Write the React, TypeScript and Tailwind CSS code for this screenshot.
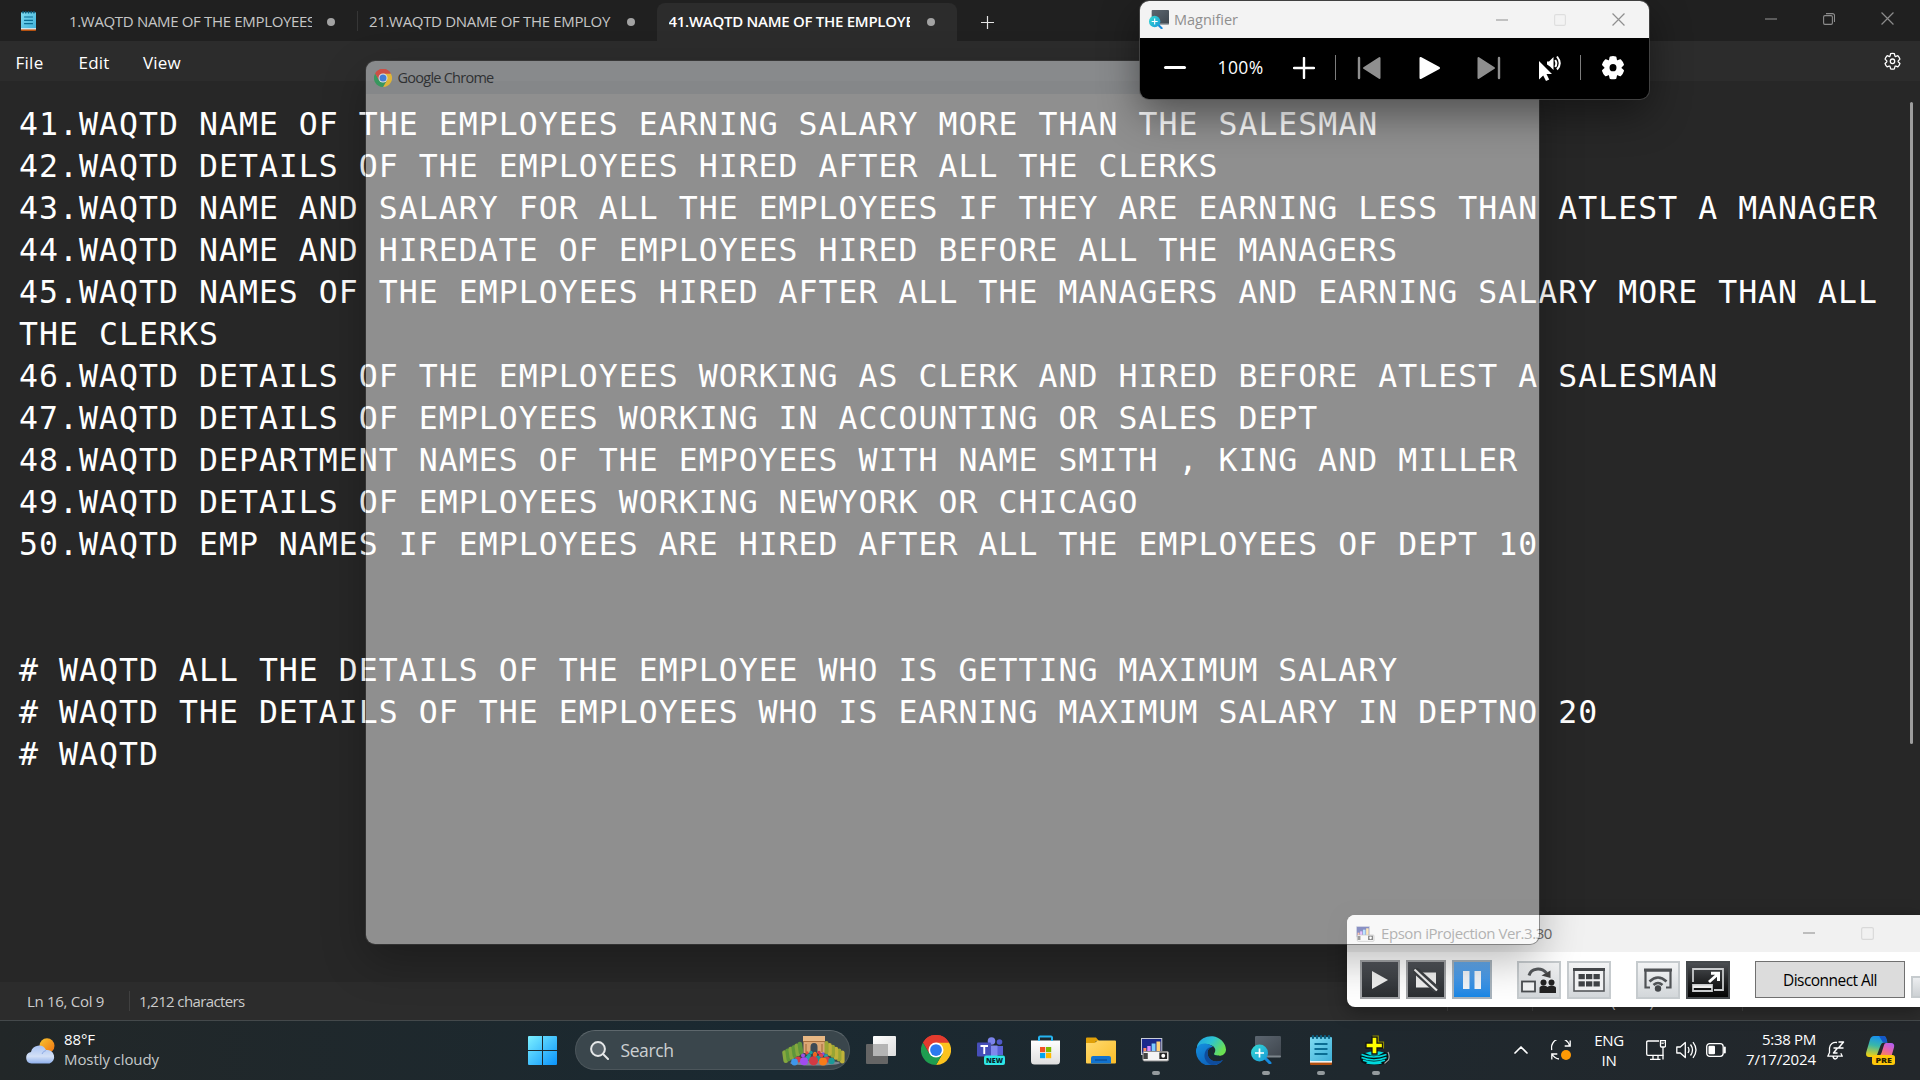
import React, { useLayoutEffect, useRef, useState } from "react";

const UI = "font-['Open_Sans','Noto_Sans',sans-serif]";

/* Single-line label whose letter spacing is tuned so that it spans `w` pixels. */
function Fit({ w, children, className = "" }: { w: number; children: string; className?: string }) {
  const ref = useRef<HTMLSpanElement>(null);
  const [ls, setLs] = useState(0);
  useLayoutEffect(() => {
    const el = ref.current;
    if (!el) return;
    const natural = el.getBoundingClientRect().width;
    setLs((w - natural) / children.length);
  }, [w, children]);
  return (
    <span ref={ref} className={`inline-block shrink-0 whitespace-pre ${className}`} style={{ letterSpacing: `${ls}px` }}>
      {children}
    </span>
  );
}

function NotepadIcon({ className }: { className: string }) {
  return (
    <svg viewBox="0 0 22 30" className={className} preserveAspectRatio="none">
      <defs>
        <linearGradient id="np" x1="0" y1="0" x2="1" y2="1">
          <stop offset="0" stopColor="#7fdcf2" />
          <stop offset="1" stopColor="#3fb0d8" />
        </linearGradient>
      </defs>
      <rect x="0" y="24" width="22" height="6" rx="1" fill="#b4500f" />
      <rect x="0" y="23" width="22" height="4.6" fill="#f2f2f2" />
      <rect x="0" y="2" width="22" height="24" rx="1" fill="url(#np)" />
      {[3, 7, 11, 15, 19].map((x) => (
        <rect key={x} x={x - 1.2} y="0" width="2.4" height="4" rx="1.2" fill="#0b5f80" />
      ))}
      <path d="M4.5 9h13M4.5 14h13M4.5 19h13" stroke="#0a6d93" strokeWidth="1.8" />
    </svg>
  );
}

function ChromeIcon({ className }: { className: string }) {
  return (
    <svg viewBox="0 0 48 48" className={className}>
      <path d="M24 24 3.2 12A24 24 0 0 1 44.8 12Z" fill="#e33b2e" />
      <path d="M24 12H44.8A24 24 0 0 1 24 48L34.4 30Z" fill="#fcc31e" />
      <path d="M3.2 12 13.6 30 24 36 34.4 30 24 48A24 24 0 0 1 3.2 12Z" fill="#1f9d50" />
      <path d="M3.2 12A24 24 0 0 1 44.8 12H24L13.6 30Z" fill="#e33b2e" />
      <circle cx="24" cy="24" r="12" fill="#fff" />
      <circle cx="24" cy="24" r="9.4" fill="#2b79ee" />
    </svg>
  );
}

function MagnifierIcon({ className }: { className: string }) {
  return (
    <svg viewBox="0 0 30 28" className={className} preserveAspectRatio="none">
      <defs>
        <linearGradient id="mgScreen" x1="0" y1="0" x2="1" y2="1">
          <stop offset="0" stopColor="#5c6670" />
          <stop offset="1" stopColor="#3f464e" />
        </linearGradient>
        <linearGradient id="mgLens" x1="0" y1="0" x2="1" y2="1">
          <stop offset="0" stopColor="#35dcd2" />
          <stop offset="1" stopColor="#1897d8" />
        </linearGradient>
      </defs>
      <rect x="4" y="0" width="26" height="21" rx="1.2" fill="url(#mgScreen)" />
      <rect x="4" y="19.5" width="26" height="2" rx="1" fill="#7d858c" />
      <path d="m13 21 6 6" stroke="#1789dc" strokeWidth="3" strokeLinecap="round" />
      <circle cx="8.5" cy="17" r="8.5" fill="url(#mgLens)" />
      <path d="M8.5 12.5v9M4 17h9" stroke="#fff" strokeWidth="1.7" />
    </svg>
  );
}

function ProjectorIcon({ className }: { className: string }) {
  return (
    <svg viewBox="0 0 30 24" className={className} preserveAspectRatio="none">
      <rect x="0.5" y="0.5" width="21" height="16" fill="#1b2a8c" stroke="#c9cdd8" />
      <rect x="2.5" y="10" width="3" height="5" fill="#ff8a5c" />
      <rect x="6.5" y="8" width="3.5" height="7" fill="#d78cff" />
      <rect x="11" y="5.5" width="4" height="9.5" fill="#7ecbff" />
      <rect x="16" y="3.5" width="4" height="11.5" fill="#ffd27a" />
      <rect x="2" y="13.5" width="26.5" height="9.5" rx="1.5" fill="#f4f4f4" stroke="#8d8d8d" />
      <rect x="2.5" y="15" width="4.5" height="6" fill="#444" />
      <rect x="19" y="14.5" width="8" height="6.5" fill="#222" />
      <circle cx="23" cy="17.8" r="2" fill="#fff" />
    </svg>
  );
}

function Gear({ className, filled }: { className: string; filled?: boolean }) {
  const d =
    "M12 1.2c.9 0 1.6.1 2.4.3l.6 2.7c.1.6.7.9 1.3.7l2.5-.9c1.2 1.1 2.1 2.5 2.6 4.1l-2 1.9c-.4.4-.4 1.1 0 1.5l2 1.9c-.5 1.6-1.4 3-2.6 4.1l-2.5-.9c-.6-.2-1.2.1-1.3.7l-.6 2.7c-1.6.4-3.2.4-4.8 0L9 17.3c-.1-.6-.7-.9-1.3-.7l-2.5.9c-1.2-1.1-2.1-2.5-2.6-4.1l2-1.9c.4-.4.4-1.1 0-1.5l-2-1.9c.5-1.6 1.4-3 2.6-4.1l2.5.9c.6.2 1.2-.1 1.3-.7l.6-2.7c.8-.2 1.6-.3 2.4-.3Z";
  return (
    <svg viewBox="0 -0.5 24 23" className={className} preserveAspectRatio="none">
      {filled ? (
        <>
          <path d={d} fill="#fff" stroke="#fff" strokeWidth="1.5" strokeLinejoin="round" />
          <circle cx="12" cy="10.75" r="3.2" fill="#000" />
        </>
      ) : (
        <>
          <path d={d} fill="none" stroke="#fff" strokeWidth="1.6" strokeLinejoin="round" />
          <circle cx="12" cy="10.75" r="2.8" fill="none" stroke="#fff" strokeWidth="1.6" />
        </>
      )}
    </svg>
  );
}

function WinMin({ className }: { className: string }) {
  return (
    <svg viewBox="0 0 12 12" className={className} fill="none" stroke="currentColor" strokeWidth="1.1">
      <path d="M0 6h12" />
    </svg>
  );
}
function WinMax({ className }: { className: string }) {
  return (
    <svg viewBox="0 0 12 12" className={className} fill="none" stroke="currentColor" strokeWidth="1.1">
      <rect x="0.6" y="0.6" width="10.8" height="10.8" rx="1.3" />
    </svg>
  );
}
function WinClose({ className }: { className: string }) {
  return (
    <svg viewBox="0 0 12 12" className={className} fill="none" stroke="currentColor" strokeWidth="1.1">
      <path d="M.5.5l11 11M11.5.5l-11 11" />
    </svg>
  );
}

function Dot({ className }: { className: string }) {
  return <span className={`size-2 shrink-0 rounded-full bg-[#a3a3a3] ${className}`} />;
}

function TitleBar() {
  return (
    <div className="flex h-[41px] shrink-0 items-center bg-[#202020] text-[15px] text-[#c6c6c6]">
      <NotepadIcon className="ml-[21px] h-5 w-[15px]" />
      <div className="ml-[33px] mt-[2px] w-[243px] overflow-hidden">
        <Fit w={246}>1.WAQTD NAME OF THE EMPLOYEES</Fit>
      </div>
      <Dot className="ml-[15px] mt-[2px]" />
      <span className="ml-[22px] h-5 w-px bg-[#363636]" />
      <div className="ml-[11px] mt-[2px] w-[242px] overflow-hidden">
        <Fit w={241}>21.WAQTD DNAME OF THE EMPLOY</Fit>
      </div>
      <Dot className="ml-[16px] mt-[2px]" />
      <div className="ml-[22px] mt-[3px] flex h-[38px] w-[300px] items-center rounded-t-lg bg-[#2c2c2c] pb-px pl-[11.500px] font-semibold text-white">
        <div className="w-[241px] overflow-hidden">
          <Fit w={245}>41.WAQTD NAME OF THE EMPLOYE</Fit>
        </div>
        <Dot className="ml-[17px]" />
      </div>
      <svg viewBox="0 0 13 13" className="ml-[24px] mt-[3px] size-[13px]" stroke="#e4e4e4" strokeWidth="1.2">
        <path d="M6.5 0v13M0 6.5h13" />
      </svg>
      <div className="ml-auto flex items-center pb-[4px] text-[#8c8c8c]">
        <WinMin className="mr-[46px] size-3" />
        <svg viewBox="0 0 12 12" className="mr-[46px] size-3" fill="none" stroke="currentColor" strokeWidth="1.1">
          <rect x="0.6" y="2.6" width="8.8" height="8.8" rx="1.3" />
          <path d="M3 .6h6.500a2 2 0 0 1 2 2V9" />
        </svg>
        <WinClose className="mr-[26px] size-[13px]" />
      </div>
    </div>
  );
}

function MenuBar() {
  return (
    <div className="flex h-10 shrink-0 items-center bg-[#2c2c2c] text-[17px] text-white">
      <Fit w={28} className="ml-[15.500px] mt-[3px]">File</Fit>
      <Fit w={31} className="ml-[35px] mt-[3px]">Edit</Fit>
      <Fit w={38} className="ml-[33.500px] mt-[3px]">View</Fit>
      <Gear className="ml-auto mr-[18px] size-[19px]" />
    </div>
  );
}

const LINES = [
  "41.WAQTD NAME OF THE EMPLOYEES EARNING SALARY MORE THAN THE SALESMAN",
  "42.WAQTD DETAILS OF THE EMPLOYEES HIRED AFTER ALL THE CLERKS",
  "43.WAQTD NAME AND SALARY FOR ALL THE EMPLOYEES IF THEY ARE EARNING LESS THAN ATLEST A MANAGER",
  "44.WAQTD NAME AND HIREDATE OF EMPLOYEES HIRED BEFORE ALL THE MANAGERS",
  "45.WAQTD NAMES OF THE EMPLOYEES HIRED AFTER ALL THE MANAGERS AND EARNING SALARY MORE THAN ALL",
  "THE CLERKS",
  "46.WAQTD DETAILS OF THE EMPLOYEES WORKING AS CLERK AND HIRED BEFORE ATLEST A SALESMAN",
  "47.WAQTD DETAILS OF EMPLOYEES WORKING IN ACCOUNTING OR SALES DEPT",
  "48.WAQTD DEPARTMENT NAMES OF THE EMPOYEES WITH NAME SMITH , KING AND MILLER",
  "49.WAQTD DETAILS OF EMPLOYEES WORKING NEWYORK OR CHICAGO",
  "50.WAQTD EMP NAMES IF EMPLOYEES ARE HIRED AFTER ALL THE EMPLOYEES OF DEPT 10",
  "",
  "",
  "# WAQTD ALL THE DETAILS OF THE EMPLOYEE WHO IS GETTING MAXIMUM SALARY",
  "# WAQTD THE DETAILS OF THE EMPLOYEES WHO IS EARNING MAXIMUM SALARY IN DEPTNO 20",
  "# WAQTD",
];

function Editor() {
  return (
    <div className="flex flex-1 justify-between bg-[#272727] pr-[7px]">
      <div className="pl-[19px] pt-[22px] font-['DejaVu_Sans_Mono',monospace] text-[31.500px] leading-[42px] text-white">
        {LINES.map((l, i) => (
          <div key={i} className="h-[42px] whitespace-pre">
            {l ? <Fit w={l.length * 19.99}>{l}</Fit> : null}
          </div>
        ))}
      </div>
      <div className="mt-[21px] h-[642px] w-[3px] shrink-0 rounded-full bg-[#9d9d9d]" />
    </div>
  );
}

function StatusBar() {
  return (
    <div className="flex h-[38px] shrink-0 items-center bg-[#2c2c2c] text-[15px] text-[#cbcbcb]">
      <Fit w={77} className="ml-[27px]">Ln 16, Col 9</Fit>
      <span className="ml-[25px] h-5 w-px bg-[#404040]" />
      <Fit w={105.5} className="ml-[9px]">1,212 characters</Fit>
      <span className="ml-auto h-5 w-px bg-[#404040]" />
      <Fit w={38} className="ml-[11px]">100%</Fit>
      <span className="ml-[35px] h-5 w-px bg-[#404040]" />
      <Fit w={110} className="ml-[11px]">Windows (CRLF)</Fit>
      <span className="ml-[88px] h-5 w-px bg-[#404040]" />
      <Fit w={40} className="ml-[11px] mr-[126px]">UTF-8</Fit>
    </div>
  );
}

function EpsonButton({ tone, children }: { tone: string; children: React.ReactNode }) {
  return <div className={`flex shrink-0 items-center justify-center border-2 ${tone}`}>{children}</div>;
}

const DARK = "h-[39px] w-[40px] border-[#a2a4a7] bg-linear-to-b from-[#505359] to-[#2b2e31]";
const BLUE = "h-[39px] w-[40px] border-[#a9b4bd] bg-linear-to-b from-[#63a8ea] to-[#1787e6]";
const LIGHT = "h-[38px] w-[44px] border-[#c6cbce] bg-linear-to-b from-[#f3f4f5] to-[#d3d7da]";
const BLACK = "h-[38px] w-[44px] border-[#45494c] bg-linear-to-b from-[#4b4e52] to-[#050505]";

function EpsonWindow() {
  return (
    <div className="absolute left-[1347px] top-[915px] h-[92px] w-[573px] overflow-hidden rounded-l-lg bg-white shadow-[0_4px_18px_rgba(0,0,0,0.35)]">
      <div className="flex h-[37px] items-center bg-[#f1f1f1] text-[15px] text-[#6a6a6a]">
        <ProjectorIcon className="ml-[9px] h-4 w-[19px] shrink-0" />
        <Fit w={171} className="ml-[6px] mb-px">Epson iProjection Ver.3.30</Fit>
        <WinMin className="ml-[251px] mb-[2px] size-3 shrink-0 text-[#8a8a8a]" />
        <WinMax className="ml-[46px] size-[13px] shrink-0 text-[#d9d9d9]" />
      </div>
      <div className="flex w-[620px] items-center pl-[13px] pt-[8px]">
        <div className="flex shrink-0 gap-[6px]">
          <EpsonButton tone={DARK}>
            <svg viewBox="0 0 18 18" className="size-[18px]"><path d="M1 0v18l16-9Z" fill="#f0f0f0" /></svg>
          </EpsonButton>
          <EpsonButton tone={DARK}>
            <svg viewBox="0 0 26 24" className="h-6 w-[26px]">
              <path d="M3 4.500h20v15H3Z" fill="#f0f0f0" />
              <path d="M1 1 24 22" stroke="#3d4044" strokeWidth="7" />
              <path d="M1.500 1.500 24 22.500" stroke="#f0f0f0" strokeWidth="2.2" />
            </svg>
          </EpsonButton>
          <EpsonButton tone={BLUE}>
            <svg viewBox="0 0 18 18" className="size-[18px]"><path d="M0 0h6.500v18H0ZM11.500 0H18v18h-6.500Z" fill="#f3f6fa" /></svg>
          </EpsonButton>
        </div>
        <div className="ml-[25px] flex shrink-0 gap-[6px]">
          <EpsonButton tone={LIGHT}>
            <svg viewBox="0 0 36 28" className="h-7 w-9">
              <rect x="1" y="15.500" width="13" height="10" fill="#f2f3f4" stroke="#4a4d50" strokeWidth="1.8" />
              <path d="M8 9.500C10 2 20 1 25.500 7" fill="none" stroke="#55585b" strokeWidth="3" />
              <path d="m20.500 9.500 9-5V12Z" fill="#444" />
              <circle cx="22.500" cy="16.500" r="3" fill="#222" /><circle cx="30.500" cy="16.500" r="3" fill="#222" />
              <path d="M18.500 27v-5q0-2 4-2.500 3 0 4 1.500 1-1.500 4-1.500 4.500.5 4.500 2.500v5Z" fill="#222" />
            </svg>
          </EpsonButton>
          <EpsonButton tone={LIGHT}>
            <svg viewBox="0 0 32 24" className="h-6 w-8">
              <rect x="1" y="1" width="30" height="22" fill="#f0f1f2" stroke="#55585b" strokeWidth="1.6" />
              <path d="M0 1.500h32" stroke="#44474a" strokeWidth="3" />
              <g fill="#3f4245">
                {[5.5, 13, 20.5].map((x) => (
                  <g key={x}><rect x={x} y="6" width="6.3" height="5.2" /><rect x={x} y="13.3" width="6.3" height="5.2" /></g>
                ))}
              </g>
            </svg>
          </EpsonButton>
        </div>
        <div className="ml-[25px] flex shrink-0 gap-[6px]">
          <EpsonButton tone={LIGHT}>
            <svg viewBox="0 0 28 24" className="h-6 w-7" fill="none" stroke="#505356" strokeWidth="2.2">
              <path d="M6 19.500H1.500V2.500h25v17H22" /><path d="M0 2h28" strokeWidth="3" />
              <path d="M5.500 13.500q8.500-8 17 0M9.500 17q4.500-4 9 0" strokeWidth="2.6" />
              <circle cx="14" cy="20.500" r="3.2" fill="#44474a" stroke="none" />
            </svg>
          </EpsonButton>
          <EpsonButton tone={BLACK}>
            <svg viewBox="0 0 32 24" className="h-6 w-8" fill="none" stroke="#c9cbcd" strokeWidth="1.8">
              <path d="M1 14V1h30v21h-9M1 17h19v6H1Z" /><path d="M1 17.500h19V20H1Z" fill="#eee" stroke="none" />
              <path d="M17 14 26 6M19 5.200h7.500V13" stroke="#fff" strokeWidth="3" />
            </svg>
          </EpsonButton>
        </div>
        <div className="ml-[25px] flex h-[37px] w-[150px] shrink-0 items-center justify-center border border-[#707070] bg-[#dcdcdc] pt-[2px] text-[15.500px] text-black">
          <Fit w={94}>Disconnect All</Fit>
        </div>
        <div className="ml-[6px] mt-[15px] h-[22px] w-5 shrink-0 border-2 border-[#c6cbce] bg-linear-to-b from-[#eceef0] to-[#cdd1d4]" />
      </div>
    </div>
  );
}

function ChromeWindow() {
  return (
    <div className="absolute left-[366px] top-[61px] flex h-[883px] w-[1173px] flex-col overflow-hidden rounded-[9px] shadow-[0_0_0_1px_rgba(70,70,70,0.5),0_16px_44px_rgba(0,0,0,0.28)]">
      <div className="flex h-[33px] items-center bg-[rgba(236,240,244,0.48)] text-[14.500px] text-[#2f3133]">
        <ChromeIcon className="ml-[8px] size-[18px] opacity-75" />
        <Fit w={96} className="ml-[5.500px]">Google Chrome</Fit>
      </div>
      <div className="flex-1 bg-[rgba(255,255,255,0.482)]" />
    </div>
  );
}

function MagnifierWindow() {
  return (
    <div className="absolute left-[1140px] top-px h-[98px] w-[509px] overflow-hidden rounded-[9px] bg-black shadow-[0_0_0_1px_rgba(80,80,80,0.7),0_14px_40px_rgba(0,0,0,0.45)]">
      <div className="flex h-[37px] items-center bg-[#f3f3f3] text-[14.500px] text-[#8f8f8f]">
        <MagnifierIcon className="ml-[9px] h-[19px] w-5" />
        <Fit w={64} className="ml-[5px]">Magnifier</Fit>
        <WinMin className="ml-[258px] size-3" />
        <WinMax className="ml-[46px] size-3 text-[#dedede]" />
        <WinClose className="ml-[46px] size-[13px]" />
      </div>
      <div className="flex h-[59px] items-center text-white">
        <span className="ml-[24px] h-[3px] w-[22px] rounded-full bg-white" />
        <Fit w={46} className="ml-[31.500px] text-[17.500px]">100%</Fit>
        <svg viewBox="0 0 22 22" className="ml-[29.500px] size-[22px] shrink-0" stroke="#fff" strokeWidth="2.4" strokeLinecap="round">
          <path d="M11 1v20M1 11h20" />
        </svg>
        <span className="ml-[20px] h-[25px] w-px bg-[#7d7d7d]" />
        <svg viewBox="0 0 24 24" className="ml-[21px] size-6 shrink-0" fill="#8f8f8f" stroke="#8f8f8f" strokeLinejoin="round" strokeLinecap="round" strokeWidth="2">
          <path d="M2 2v20" strokeWidth="2.4" /><path d="M22.500 2v20L7 12Z" />
        </svg>
        <svg viewBox="0 0 22 24" className="ml-[38px] h-6 w-[22px] shrink-0" fill="#fff" stroke="#fff" strokeLinejoin="round" strokeWidth="2">
          <path d="M1.500 2v20l18.500-10Z" />
        </svg>
        <svg viewBox="0 0 24 24" className="ml-[36px] size-6 shrink-0" fill="#8f8f8f" stroke="#8f8f8f" strokeLinejoin="round" strokeLinecap="round" strokeWidth="2">
          <path d="M22 2v20" strokeWidth="2.4" /><path d="M1.500 2v20L17 12Z" />
        </svg>
        <svg viewBox="0 0 24 26" className="ml-[37px] h-[26px] w-6 shrink-0" fill="#fff">
          <path d="M1 6v18.500l4.200-4L8 26l3.200-1.500L8.500 19h5.500Z" />
          <path d="M9 6.500h2L15.500 2v13l-3.500-3.500L9 9.500Z" />
          <path d="M17.200 5q2.200 3.500 0 7M19 1.500q5.500 7 0 13" fill="none" stroke="#fff" strokeWidth="2" />
        </svg>
        <span className="ml-[17.500px] h-[25px] w-px bg-[#7d7d7d]" />
        <Gear filled className="ml-[19.500px] size-[26px] shrink-0" />
      </div>
    </div>
  );
}

function WeatherIcon() {
  return (
    <svg viewBox="0 0 30 26" className="h-[26px] w-[31px]">
      <defs>
        <linearGradient id="sun" x1="0" y1="0" x2="1" y2="1"><stop offset="0" stopColor="#f8c630" /><stop offset="1" stopColor="#f0700f" /></linearGradient>
        <linearGradient id="cloud" x1="0" y1="0" x2="0" y2="1"><stop offset="0" stopColor="#a9c3f3" /><stop offset="0.6" stopColor="#d3e0f6" /><stop offset="1" stopColor="#8fb0ec" /></linearGradient>
      </defs>
      <circle cx="21.500" cy="7.800" r="7.500" fill="url(#sun)" />
      <path d="M6 25.500a5.800 5.800 0 0 1-.5-11.500A8 8 0 0 1 20.500 12 7 7 0 0 1 24 25.500Z" fill="url(#cloud)" />
      <path d="M20.500 12.500q-3 .5-4 3.500" stroke="#8fabe6" fill="none" />
    </svg>
  );
}

function ParkIcon() {
  const hedge = [0, 1, 2, 3, 4, 5];
  const balls: [number, number, number, string][] = [
    [25, 18, 1.7, "#e0503c"], [29, 17.5, 1.7, "#16a0a0"], [33, 18.5, 1.7, "#f08020"], [37, 17.5, 1.7, "#d83848"], [41, 19, 1.7, "#7b52e0"],
    [21, 20.5, 2, "#9a50e6"], [27, 20.5, 2, "#1e9c9c"], [33, 20, 2.2, "#f06020"], [39, 20.5, 2.2, "#e04050"], [44, 21, 2, "#22a0a8"],
    [16, 24.5, 3, "#d43b46"], [26, 23, 2.6, "#22a0a8"], [36, 23.5, 2.8, "#18989a"], [45, 24.5, 3, "#d43b46"],
    [12.5, 27, 3.4, "#3e97ea"], [22, 26.2, 4, "#a04cf0"], [31.5, 25.8, 4.6, "#d23a44"], [41, 26.5, 4, "#f77c1a"], [49.5, 26, 3.2, "#1c9a98"],
  ];
  return (
    <svg viewBox="0 0 63 31" className="h-[31px] w-[63px]">
      <ellipse cx="33" cy="28" rx="25" ry="2.6" fill="#7b8792" />
      {hedge.map((i) => (
        <rect key={i} x={i * 3.3} y={15.5 - i * 1.7} width="4.6" height="13" rx="2.3" transform={`rotate(-8 ${i * 3.3} 16)`} fill={i % 2 ? "#5f963a" : "#86a83e"} />
      ))}
      {hedge.map((i) => (
        <rect key={i} x={58 - i * 3.2} y={15.5 - i * 1.9} width="4.6" height="13" rx="2.3" fill={i % 2 ? "#9aa534" : "#c0b23a"} />
      ))}
      <rect x="21.500" y="2" width="21" height="16" fill="#dba774" />
      <rect x="21" y="1" width="22" height="5.500" fill="#e8b884" />
      <path d="M21 6.500h22" stroke="#a9713f" />
      <path d="M28.500 19v-7q0-4 3.500-4t3.500 4v7Z" fill="#3d4a55" />
      <path d="M24 9v8M40 9v8" stroke="#b37c4a" strokeWidth="1.5" />
      {balls.map(([x, y, r, c], i) => <circle key={i} cx={x} cy={y} r={r} fill={c} />)}
    </svg>
  );
}

function AppSlot({ children, running }: { children: React.ReactNode; running?: boolean }) {
  return (
    <div className="relative flex h-[60px] w-[55px] shrink-0 items-center justify-center pb-px">
      {children}
      {running && <span className="absolute bottom-[6px] h-[4px] w-2 rounded-full bg-[#949a9d]" />}
    </div>
  );
}

function Taskbar() {
  return (
    <div className="flex h-[60px] shrink-0 items-center border-t border-[#44494b] bg-linear-to-r from-[#222728] via-[#1a2931] via-40% to-[#23272b] text-[15px] text-white">
      <div className="flex w-[528px] shrink-0 items-center pl-[25px]">
        <WeatherIcon />
        <div className="ml-[8px] mb-[3px] flex flex-col leading-[20px]">
          <div><Fit w={31}>88°F</Fit></div>
          <div className="text-[#c5c9ca]"><Fit w={95}>Mostly cloudy</Fit></div>
        </div>
      </div>
      <svg viewBox="0 0 29 29" className="mb-px size-[29px] shrink-0">
        <defs><linearGradient id="win" x1="0" y1="0" x2="1" y2="1"><stop offset="0" stopColor="#7cf0ff" /><stop offset="1" stopColor="#0a93fb" /></linearGradient></defs>
        <path d="M1 0h13v14H0V1q0-1 1-1ZM15 0h13q1 0 1 1v13H15ZM0 15h14v14H1q-1 0-1-1ZM15 15h14v13q0 1-1 1H15Z" fill="url(#win)" />
      </svg>
      <div className="ml-[18px] mb-px flex h-10 w-[275px] shrink-0 items-center rounded-full border border-[#4c565b] border-t-[#5d676c] bg-[#3a464c]">
        <svg viewBox="0 0 19 19" className="ml-[14px] size-[19px]" fill="none" stroke="#e6e8e9" strokeWidth="2" strokeLinecap="round">
          <circle cx="8" cy="8" r="6.9" fill="#58636a" /><path d="m13 13 5 5" />
        </svg>
        <Fit w={53} className="ml-[11.500px] mt-[1px] text-[17.500px] text-[#ccd0d2]">Search</Fit>
        <span className="ml-[108px]"><ParkIcon /></span>
      </div>
      <div className="ml-[3px] flex shrink-0">
        <AppSlot>
          <svg viewBox="0 0 30 28" className="h-7 w-[30px]">
            <defs><linearGradient id="tv" x1="0" y1="0" x2="1" y2="1"><stop offset="0" stopColor="#fff" /><stop offset="1" stopColor="#dcdcdc" /></linearGradient></defs>
            <rect x="0" y="8" width="22" height="20" rx="1" fill="#656565" />
            <rect x="7" y="0" width="23" height="20" rx="1" fill="url(#tv)" />
            <path d="M7 8h15v12H7Z" fill="#b4b4b4" />
          </svg>
        </AppSlot>
        <AppSlot><ChromeIcon className="size-[30px]" /></AppSlot>
        <AppSlot>
          <svg viewBox="0 0 28 28" className="mt-[2px] size-7">
            <circle cx="14.500" cy="4" r="3.8" fill="#7b83eb" /><circle cx="22.500" cy="5" r="2.8" fill="#5059c9" />
            <path d="M18 9h8v9h-8Z" fill="#5b62d6" /><path d="M10 8.500h10.500V19H10Z" fill="#8189ee" />
            <rect x="0" y="5.500" width="14" height="14" rx="1" fill="#464eb8" />
            <path d="M3.500 9h7.500M7.250 9v8" stroke="#fff" strokeWidth="1.9" />
            <rect x="7" y="18.500" width="21" height="9.500" rx="2" fill="#2ee6e6" />
            <text x="9" y="26" textLength="17" lengthAdjust="spacingAndGlyphs" className="font-['Open_Sans',sans-serif] text-[7.500px] font-extrabold" fill="#06262b">NEW</text>
          </svg>
        </AppSlot>
        <AppSlot>
          <svg viewBox="0 0 29 30" className="mr-px h-[30px] w-[29px]">
            <defs><linearGradient id="st" x1="0" y1="0" x2="0" y2="1"><stop offset="0" stopColor="#fff" /><stop offset="1" stopColor="#dedede" /></linearGradient></defs>
            <path d="M8 7V2.500q0-1 1-1h11q1 0 1 1V7" fill="none" stroke="#25b4f0" strokeWidth="1.8" />
            <path d="M0 5.500h29V26a3.500 3.500 0 0 1-3.500 3.500h-22A3.500 3.500 0 0 1 0 26Z" fill="url(#st)" />
            <path d="M8 2v4M21 2v4" stroke="#25b4f0" strokeWidth="1.8" />
            <path d="M9 12h5.200v5.200H9Z" fill="#f25022" /><path d="M15 12h5.200v5.200H15Z" fill="#7fba00" />
            <path d="M9 18h5.200v5.200H9Z" fill="#00a4ef" /><path d="M15 18h5.200v5.200H15Z" fill="#ffb900" />
          </svg>
        </AppSlot>
        <AppSlot>
          <svg viewBox="0 0 30 27" className="h-[27px] w-[30px]">
            <defs><linearGradient id="fo" x1="0" y1="0" x2="1" y2="1"><stop offset="0" stopColor="#ffda70" /><stop offset="1" stopColor="#fbbd28" /></linearGradient></defs>
            <path d="M0 1.500Q0 .5 1 .5h9l3 3.500H10L8 8H0Z" fill="#e0a008" />
            <path d="M0 6h8.500l3-2.500H29q1 0 1 1V25.500q0 1-1 1H1q-1 0-1-1Z" fill="url(#fo)" />
            <path d="M5 26.500V21q0-2 2-2h16q2 0 2 2v5.500Z" fill="#1273cf" /><path d="M9 23h12" stroke="#0b4f9b" strokeWidth="1.4" />
          </svg>
        </AppSlot>
        <AppSlot running><ProjectorIcon className="h-6 w-[29px]" /></AppSlot>
        <AppSlot>
          <svg viewBox="0 0 30 30" className="size-[30px]">
            <defs>
              <linearGradient id="e1" x1="0" y1="0" x2="1" y2="0.5"><stop offset="0" stopColor="#1f9fe4" /><stop offset="0.5" stopColor="#2cc3d2" /><stop offset="1" stopColor="#6be052" /></linearGradient>
              <linearGradient id="e2" x1="0" y1="0" x2="0.6" y2="1"><stop offset="0" stopColor="#1490df" /><stop offset="1" stopColor="#0d5fb8" /></linearGradient>
            </defs>
            <path d="M1 11A15 15 0 0 1 30 14.500C30 19 26 21 22.500 21 19.500 21 18 20 18 19c0-.8 1.300-1.500 1.300-4C19.300 12 16 9.500 11 9.500 6 9.500 2 11 1 14Z" fill="url(#e1)" />
            <path d="M0 15C.5 11 4.500 8 9.500 8.500 13 9 17 11 17.500 12.500 14 11.500 11.500 14.500 11.500 18c0 5 4.500 8.500 9 8.500 3 0 5-.8 6.500-1.500A15 15 0 0 1 0 15Z" fill="url(#e2)" />
            <path d="M17.500 12.300C13 12 11.500 15 11.500 18c0 5 4.500 8.500 9 8.500 2.500 0 5-.8 6.500-1.500-3.500 4.500-9 5.500-12 4.800C9 27 7.500 22 9 17.500c1-3 4-6.500 8.500-5.200Z" fill="#0f4c9c" />
            <path d="M17.500 12.300c-2.500 1-2.500 4.500-1.500 6.500 1.500 2.500 5 3 7.500 2.500" fill="none" stroke="#142b38" strokeWidth="2" />
          </svg>
        </AppSlot>
        <AppSlot running><MagnifierIcon className="h-7 w-[30px]" /></AppSlot>
        <AppSlot running><NotepadIcon className="h-[30px] w-[22px]" /></AppSlot>
        <AppSlot running>
          <svg viewBox="0 0 30 30" className="ml-[-1px] size-[30px]">
            <path d="M0 23Q-1 19 8 17h14q7 0 7.500 5 .5 4-3 6.500Q14 31.500 4 28.500 0 26.500 0 23Z" fill="#061012" />
            <path d="M28 17q2 4 .5 8l-4 3.500" fill="none" stroke="#a8a8a8" strokeWidth="1.2" />
            <path d="M1.500 19.500q12 5 25 0M1.500 22.500q12.500 5 25 0M3 25.300q11 4 22 0M6.500 28q8 1.500 15 0" fill="none" stroke="#00d9dd" strokeWidth="1.7" />
            <path d="M5 18q9-3 19-.5l-6 3h-7Z" fill="#00d9dd" />
            <path d="M12 2h5V8h5.500v5H17v6h-5v-6H6V8h6Z" fill="#ffff00" stroke="#111" strokeWidth="1.3" />
            <path d="M12.500 1h5.800V7h5.200v6.500" fill="none" stroke="#8d8700" strokeWidth="1.2" />
          </svg>
        </AppSlot>
      </div>
      <svg viewBox="0 0 14 8" className="ml-[111px] mb-px h-2 w-[14px] shrink-0" fill="none" stroke="#fff" strokeWidth="1.7" strokeLinecap="round" strokeLinejoin="round">
        <path d="m1 7 6-6 6 6" />
      </svg>
      <svg viewBox="0 0 20 20" className="ml-[23px] mb-px size-5 shrink-0" fill="none" stroke="#fff" strokeWidth="1.3">
        <path d="M.8 10A9 9 0 0 1 18.500 5.500M19.200.5v5.500h-5.500" />
        <path d="M.8 19.500V14h5.500M1.200 14.500A9.500 9.500 0 0 0 8 19" />
        <circle cx="15" cy="15" r="5" fill="#ff9a05" stroke="none" />
      </svg>
      <div className="ml-[22.500px] mb-[2px] flex w-[31px] shrink-0 flex-col items-center leading-[20px]">
        <div><Fit w={29.5}>ENG</Fit></div>
        <div><Fit w={15}>IN</Fit></div>
      </div>
      <svg viewBox="0 0 20 20" className="ml-[21px] mb-px size-5 shrink-0" fill="none" stroke="#fff" strokeWidth="1.3">
        <path d="M13 1H2Q.7 1 .7 2.300V14q0 1.300 1.300 1.300h15.500M7 15.500v3.500M12 15.500v3.500M4 19.300h10.500" />
        <path d="M14.500.7h5V6q0 1-1 1h-3q-1 0-1-1ZM17 7v12.500M16.200 2.500v1.500M18 2.500v1.500" />
      </svg>
      <svg viewBox="0 0 21 18" className="ml-[10px] mb-px h-[18px] w-[21px] shrink-0" fill="none" stroke="#fff" strokeWidth="1.3" strokeLinejoin="round">
        <path d="M.8 6v6h3.500l5 4.500v-15l-5 4.500ZM12 6q2 3 0 6M14.500 3.500q4 5.500 0 11M17 1.200q6 7.800 0 15.600" />
      </svg>
      <svg viewBox="0 0 21 14" className="ml-[9px] mb-px h-[14px] w-[21px] shrink-0" fill="none" stroke="#fff" strokeWidth="1.3">
        <rect x="0.7" y="0.7" width="16.500" height="12.600" rx="3" />
        <rect x="2.500" y="2.700" width="6.500" height="8.600" rx="1" fill="#fff" stroke="none" /><path d="M18.800 4.500v5" strokeWidth="2" strokeLinecap="round" />
      </svg>
      <div className="ml-auto mb-[3px] flex shrink-0 flex-col items-end leading-[20px]">
        <div><Fit w={54}>5:38 PM</Fit></div>
        <div><Fit w={70}>7/17/2024</Fit></div>
      </div>
      <svg viewBox="0 0 18 19" className="ml-[11px] mb-px h-[19px] w-[18px] shrink-0" fill="none" stroke="#fff" strokeWidth="1.3" strokeLinejoin="round">
        <path d="M10 1.500a6 6 0 0 0-7.500 5.500v4.500L.8 15.200h14.500l-1.500-3M6 15.500q.5 2.500 2.300 2.500t2.200-2.500" />
        <path d="M6.500 7h4l-4 5h4M11.500 1h5l-5 6h5" strokeWidth="1.5" />
      </svg>
      <svg viewBox="0 0 29 29" className="ml-[21px] mr-[25px] size-[29px] shrink-0">
        <defs>
          <linearGradient id="c1" x1="0.5" y1="0" x2="0.3" y2="1"><stop offset="0" stopColor="#1790f0" /><stop offset="0.45" stopColor="#39b7a8" /><stop offset="1" stopColor="#f6d30e" /></linearGradient>
          <linearGradient id="c2" x1="0.8" y1="0" x2="0.2" y2="1"><stop offset="0" stopColor="#b25ef2" /><stop offset="0.5" stopColor="#e764a8" /><stop offset="1" stopColor="#ff8a4c" /></linearGradient>
        </defs>
        <path d="M8 0h9q2.500 0 3.300 3l1 3.500h-3.500q-2.300 0-3.300 3L11 19q-1 2-3.500 2H3Q-.8 21 .3 16L4 3.500Q5 0 8 0Z" fill="url(#c1)" />
        <path d="M13 0h5q2 0 2.500 3l1 3.500H17Z" fill="#1459c8" />
        <path d="M20 7h5q4 0 3 4.500L25.500 20H12.500q2.300-.5 3-3L18 9q.5-2 2-2Z" fill="url(#c2)" />
        <rect x="6" y="19" width="23" height="10" rx="2.500" fill="#ffc80a" />
        <text x="9.500" y="26.800" textLength="16.500" lengthAdjust="spacingAndGlyphs" className="font-['Open_Sans',sans-serif] text-[7.500px] font-extrabold" fill="#2b2300">PRE</text>
      </svg>
    </div>
  );
}

export default function App() {
  return (
    <div className={`relative flex h-[1080px] w-[1920px] flex-col overflow-hidden bg-[#272727] ${UI}`}>
      <TitleBar />
      <MenuBar />
      <Editor />
      <StatusBar />
      <Taskbar />
      <EpsonWindow />
      <ChromeWindow />
      <MagnifierWindow />
    </div>
  );
}
